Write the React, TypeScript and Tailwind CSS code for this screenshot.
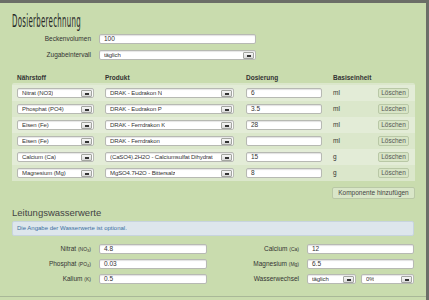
import * as React from 'react';

type Komponente = {
  naehrstoff: string;
  produkt: string;
  dosierung: string;
  einheit: string;
};

const komponenten: Komponente[] = [
  { naehrstoff: 'Nitrat (NO3)', produkt: 'DRAK - Eudrakon N', dosierung: '6', einheit: 'ml' },
  { naehrstoff: 'Phosphat (PO4)', produkt: 'DRAK - Eudrakon P', dosierung: '3.5', einheit: 'ml' },
  { naehrstoff: 'Eisen (Fe)', produkt: 'DRAK - Ferrdrakon K', dosierung: '28', einheit: 'ml' },
  { naehrstoff: 'Eisen (Fe)', produkt: 'DRAK - Ferrdrakon', dosierung: '', einheit: 'ml' },
  { naehrstoff: 'Calcium (Ca)', produkt: '(CaSO4).2H2O - Calciumsulfat Dihydrat', dosierung: '15', einheit: 'g' },
  { naehrstoff: 'Magnesium (Mg)', produkt: 'MgSO4.7H2O - Bittersalz', dosierung: '8', einheit: 'g' },
];

const TextInput = ({ value, className = '' }: { value: string; className?: string }) => (
  <div
    className={`h-[10px] bg-white border border-[#b7b9b3] rounded-[2px] shadow-[inset_0_1px_1px_rgba(0,0,0,0.12)] flex items-center pl-[4px] text-[6.5px] text-[#333] ${className}`}
  >
    {value}
  </div>
);

const Select = ({ value, className = '' }: { value: string; className?: string }) => (
  <div
    className={`h-[10px] bg-white border border-[#b7b9b3] rounded-[2px] shadow-[inset_0_1px_1px_rgba(0,0,0,0.1)] flex items-center justify-between pl-[4px] pr-[1px] text-[6px] tracking-[-0.1px] text-[#333] ${className}`}
  >
    <span className="whitespace-nowrap overflow-hidden">{value}</span>
    <span className="w-[11px] h-[7px] shrink-0 border border-[#a3a5a0] rounded-[1px] bg-gradient-to-b from-[#f6f6f6] to-[#dadada] flex items-end justify-center pb-[1px]">
      <span className="w-[4px] h-[2px] bg-[#333]" />
    </span>
  </div>
);

const Label = ({ children }: { children: React.ReactNode }) => (
  <div className="text-right text-[6.5px] text-[#333] whitespace-nowrap">{children}</div>
);

const App: React.FC = () => {
  return (
    <div className="w-[429px] h-[300px] overflow-hidden bg-[#c9dcae] font-['Liberation_Sans',Arial,sans-serif]">
      <div className="h-[3px] bg-[#6b6e67]" />
      <div className="flex h-[297px]">
        <div className="flex-1 h-[294px] border-b border-[#a9b898] rounded-tr-[3px]">
          {/* Titel */}
          <div className="pt-[10px] pl-[12px] h-[28px]">
            <h1 className="origin-left scale-x-[0.46] whitespace-nowrap text-[17px] leading-[16px] font-['DejaVu_Sans_Condensed','DejaVu_Sans',sans-serif] text-[#262626] tracking-[0.6px]">
              Dosierberechnung
            </h1>
          </div>

          <div className="mt-[3px] grid grid-cols-[79px_157px] gap-x-[8px] gap-y-[6px] pl-[12px] items-center">
            <Label>Beckenvolumen</Label>
            <TextInput value="100" />
            <Label>Zugabeintervall</Label>
            <Select value="täglich" />
          </div>

          {/* Tabelle */}
          <div className="mt-[13px] h-[10px] flex items-center pl-[17px] text-[6.5px] font-bold text-[#333]">
            <div className="w-[88px]">Nährstoff</div>
            <div className="w-[141px]">Produkt</div>
            <div className="w-[87px]">Dosierung</div>
            <div>Basiseinheit</div>
          </div>
          <div className="ml-[12px] w-[403px] h-[98px] pt-[2px] bg-[#dbe7cb] rounded-[2px]">
            {komponenten.map((k, i) => (
              <div
                key={i}
                className={`h-[16px] flex items-center pl-[5px] ${i % 2 === 0 ? 'bg-[#e3ecd7]' : 'bg-[#dbe7cb]'}`}
              >
                <Select value={k.naehrstoff} className="w-[77px]" />
                <Select value={k.produkt} className="w-[129px] ml-[11px]" />
                <TextInput value={k.dosierung} className="w-[76px] ml-[12px]" />
                <div className="w-[45px] ml-[11px] text-[6.5px] text-[#333]">{k.einheit}</div>
                <button className="w-[31px] h-[10px] rounded-[2px] border border-[#b9c8a6] bg-[#d8e5c6] text-[6.5px] text-[#555] leading-none">
                  Löschen
                </button>
              </div>
            ))}
          </div>

          <div className="mt-[6px] flex justify-end pr-[11px]">
            <button className="w-[83px] h-[12px] rounded-[2px] border border-[#b9c8a6] bg-[#d9e6c8] text-[6.5px] text-[#444] leading-none">
              Komponente hinzufügen
            </button>
          </div>

          {/* Leitungswasser */}
          <h2 className="mt-[8px] pl-[12px] h-[12px] leading-[12px] text-[9.5px] text-[#444]">Leitungswasserwerte</h2>
          <div className="mt-[2px] ml-[12px] w-[402px] h-[15px] bg-[#dde6ec] border border-[#c7d4de] rounded-[2px] flex items-center pl-[4px] text-[6px] text-[#3c6f9f]">
            Die Angabe der Wasserwerte ist optional.
          </div>

          <div className="mt-[8px] pl-[12px] grid grid-cols-[79px_108px_84px_107px] gap-x-[8px] gap-y-[5px] items-center">
            <Label>
              Nitrat <span className="text-[5px]">(NO<sub className="text-[4px]">3</sub>)</span>
            </Label>
            <TextInput value="4.8" />
            <Label>
              Calcium <span className="text-[5px]">(Ca)</span>
            </Label>
            <TextInput value="12" />
            <Label>
              Phosphat <span className="text-[5px]">(PO<sub className="text-[4px]">4</sub>)</span>
            </Label>
            <TextInput value="0.03" />
            <Label>
              Magnesium <span className="text-[5px]">(Mg)</span>
            </Label>
            <TextInput value="6.5" />
            <Label>
              Kalium <span className="text-[5px]">(K)</span>
            </Label>
            <TextInput value="0.5" />
            <Label>Wasserwechsel</Label>
            <div className="flex gap-[5px]">
              <Select value="täglich" className="w-[49px]" />
              <Select value="0%" className="w-[53px]" />
            </div>
          </div>
        </div>
        <div className="w-[3px] bg-[#6b6e67]" />
      </div>
    </div>
  );
};

export default App;
